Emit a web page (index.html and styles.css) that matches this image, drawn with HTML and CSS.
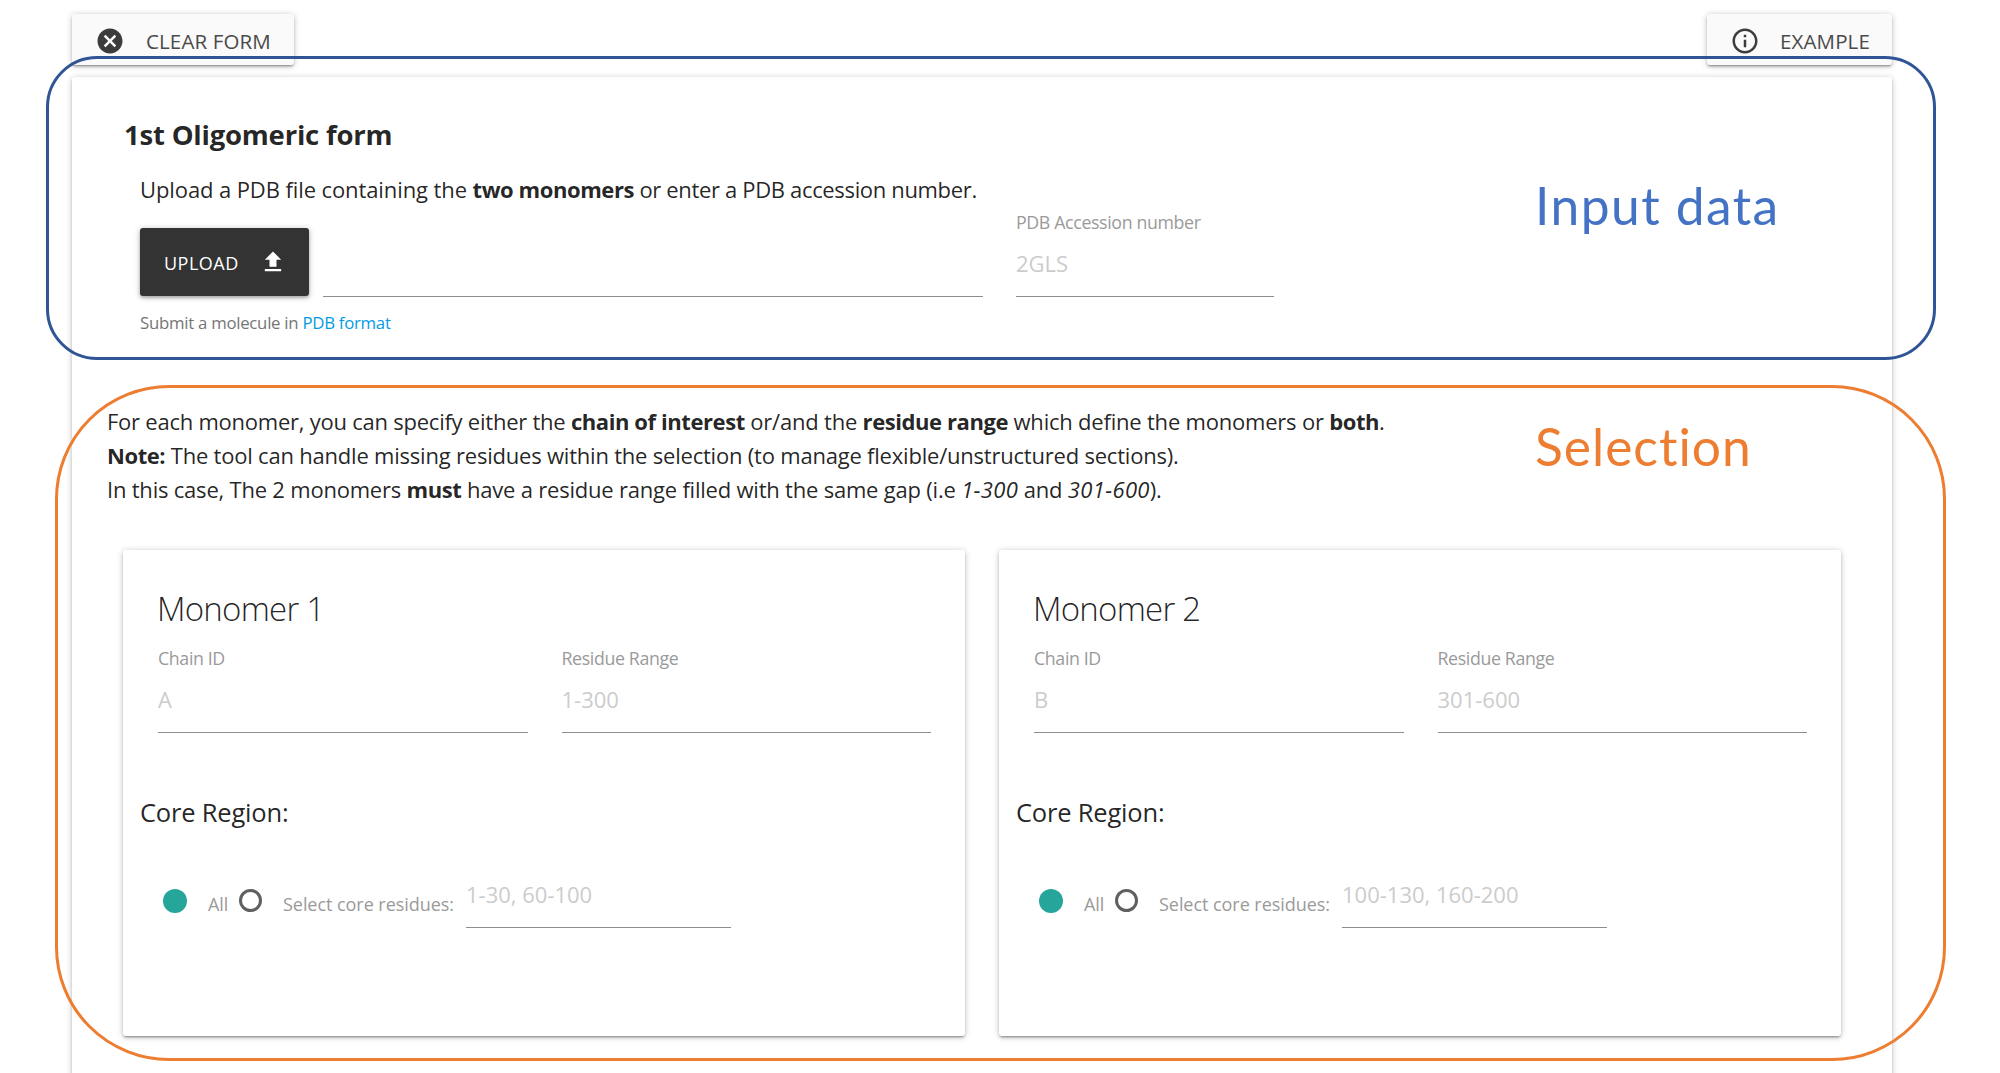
FILE: index.html
```html
<!DOCTYPE html>
<html lang="en">
<head>
<meta charset="utf-8">
<title>Oligomer form</title>
<link rel="stylesheet" href="styles.css">
</head>
<body>
<div class="page">
  <div class="toolbar">
    <button class="btn btn-clear" type="button">
      <svg class="icon" viewBox="0 0 24 24"><path d="M12 2C6.47 2 2 6.47 2 12s4.47 10 10 10 10-4.47 10-10S17.53 2 12 2zm5 13.59L15.59 17 12 13.41 8.41 17 7 15.59 10.59 12 7 8.41 8.41 7 12 10.59 15.59 7 17 8.41 13.41 12 17 15.59z"/></svg>
      <span>CLEAR FORM</span>
    </button>
    <button class="btn btn-example" type="button">
      <svg class="icon" viewBox="0 0 24 24"><path d="M11 17h2v-6h-2v6zm1-15C6.48 2 2 6.48 2 12s4.48 10 10 10 10-4.48 10-10S17.52 2 12 2zm0 18c-4.41 0-8-3.59-8-8s3.59-8 8-8 8 3.59 8 8-3.59 8-8 8zM11 9h2V7h-2v2z"/></svg>
      <span>EXAMPLE</span>
    </button>
  </div>

  <main class="panel">
    <section class="source">
      <h2 class="title">1st Oligomeric form</h2>
      <p class="lead"><span class="t1">Upload a PDB file containing the </span><b>two monomers</b> <span class="t2">or enter a PDB accession number.</span></p>
      <div class="source-row">
        <button class="upload" type="button">
          <span>UPLOAD</span>
          <svg class="upload-icon" viewBox="0 0 24 24"><path d="M9 16h6v-6h4l-7-7-7 7h4zm-4 2h14v2H5z"/></svg>
        </button>
        <input class="input file-path" type="text" aria-label="File">
        <label class="field accession"><span class="label">PDB Accession number</span><input class="input" type="text" placeholder="2GLS"></label>
      </div>
      <p class="hint">Submit a molecule in <a class="link">PDB format</a></p>
    </section>

    <section class="selection">
      <p class="text"><span class="t3">For each monomer, you can specify either the </span><b>chain of interest</b> or/and the <b>residue range</b> which define the monomers or <b>both</b>.<br>
      <b>Note:</b> The tool can handle missing residues within the selection (to manage flexible/unstructured sections).<br>
      In this case, The 2 monomers <b>must</b> have a residue range filled with the same gap (i.e <i>1-300</i> and <i>301-600</i>).</p>

      <div class="cards">
        <div class="card">
          <h3 class="card-title">Monomer 1</h3>
          <div class="fields">
            <label class="field"><span class="label">Chain ID</span><input class="input" type="text" placeholder="A"></label>
            <label class="field"><span class="label">Residue Range</span><input class="input" type="text" placeholder="1-300"></label>
          </div>
          <h4 class="core-title">Core Region:</h4>
          <div class="core">
            <span class="radio radio-on"></span><span class="radio-label all">All</span>
            <span class="radio"></span><span class="radio-label">Select core residues:</span>
            <input class="input" type="text" placeholder="1-30, 60-100">
          </div>
        </div>
        <div class="card">
          <h3 class="card-title">Monomer 2</h3>
          <div class="fields">
            <label class="field"><span class="label">Chain ID</span><input class="input" type="text" placeholder="B"></label>
            <label class="field"><span class="label">Residue Range</span><input class="input" type="text" placeholder="301-600"></label>
          </div>
          <h4 class="core-title">Core Region:</h4>
          <div class="core">
            <span class="radio radio-on"></span><span class="radio-label all">All</span>
            <span class="radio"></span><span class="radio-label">Select core residues:</span>
            <input class="input" type="text" placeholder="100-130, 160-200">
          </div>
        </div>
      </div>
    </section>
  </main>

  <div class="callout callout-input"><span class="callout-text">Input data</span></div>
  <div class="callout callout-selection"><span class="callout-text">Selection</span></div>
</div>
</body>
</html>
```
FILE: styles.css
```css
* { box-sizing: border-box; }
body { margin: 0; background: #fff; }
.page {
  position: relative;
  width: 2000px;
  height: 1073px;
  overflow: hidden;
  font-family: "Open Sans", "Noto Sans", sans-serif;
  color: rgba(0, 0, 0, .87);
}
h2, h3, h4, p { margin: 0; }
button { border: 0; font-family: inherit; text-align: left; }

.toolbar {
  display: flex;
  justify-content: space-between;
  padding: 14px 108px 0 72px;
}
.btn, .panel, .card {
  box-shadow: 0 2px 2px 0 rgba(0, 0, 0, .17), 0 3px 1px -2px rgba(0, 0, 0, .16), 0 1px 6px 0 rgba(0, 0, 0, .24);
  border-radius: 3px;
}
.btn {
  display: flex;
  align-items: center;
  height: 51px;
  padding: 2px 0 0 23px;
  background: #fafafa;
  color: #4a4a4a;
  font-size: 20.5px;
  line-height: 30px;
  letter-spacing: .13px;
}
.btn-clear { width: 222px; }
.btn-example { width: 185px; }
.icon { width: 30px; height: 30px; margin-right: 21px; fill: #3c3c3c; }
.btn-example .icon { margin-right: 20px; }

.panel {
  width: 1820px;
  height: 1040px;
  margin: 12px 0 0 72px;
  padding-top: 38px;
  background: #fff;
}
.source { height: 289px; padding-left: 68px; }
.title {
  margin: 0 0 17px -16px;
  font-size: 27.5px;
  font-weight: 700;
  line-height: 40px;
  letter-spacing: -.21px;
}
.lead { font-size: 22px; line-height: 34px; letter-spacing: -.34px; }
.lead .t1 { letter-spacing: -.1px; }
b { font-weight: 700; letter-spacing: -.42px; }
.source-row {
  display: flex;
  align-items: flex-end;
  height: 91px;
}
.upload {
  display: flex;
  align-items: center;
  width: 169px;
  height: 68px;
  margin: 0 14px 1px 0;
  padding: 2px 0 0 24px;
  border-radius: 3px;
  background: #333;
  box-shadow: 0 2px 3px 0 rgba(0, 0, 0, .2), 0 1px 6px 0 rgba(0, 0, 0, .25);
  color: #fff;
  font-size: 18px;
  letter-spacing: .5px;
}
.upload-icon { width: 28px; height: 28px; margin: -3px 0 0 20px; fill: #fff; }
.file-path.input { width: 660px; }
.accession { width: 258px; margin-left: 33px; }

.field { display: block; }
.label {
  display: block;
  color: #9a9a9a;
  font-size: 17.8px;
  line-height: 24px;
  letter-spacing: -.37px;
}
.input {
  display: block;
  width: 100%;
  height: 63px;
  padding: 0 0 5px;
  border: 0;
  border-bottom: 1px solid #8e8e8e;
  border-radius: 0;
  background: transparent;
  font: 22px "Open Sans", "Noto Sans", sans-serif;
}
.input::placeholder { color: #ccc; opacity: 1; }
.hint {
  margin-top: 13px;
  color: #757575;
  font-size: 16.8px;
  line-height: 25px;
  letter-spacing: -.27px;
}
.link { color: #039be5; }

.text {
  padding-left: 35px;
  font-size: 22px;
  line-height: 34px;
  letter-spacing: -.21px;
}
.text .t3 { letter-spacing: -.24px; }
i { letter-spacing: .35px; }
.cards {
  display: grid;
  grid-template-columns: 842px 842px;
  gap: 34px;
  margin: 44px 0 0 51px;
}
.card { height: 486px; padding-top: 37px; background: #fff; }
.card-title {
  padding-left: 34px;
  font-size: 33px;
  font-weight: 300;
  line-height: 44px;
  letter-spacing: -.75px;
}
.fields {
  display: grid;
  grid-template-columns: 1fr 1fr;
  gap: 34px;
  margin-top: 15px;
  padding: 0 34px 0 35px;
}
.core-title {
  margin-top: 61px;
  padding-left: 17px;
  font-size: 25.5px;
  font-weight: 400;
  line-height: 36px;
  letter-spacing: -.2px;
}
.core {
  display: flex;
  align-items: center;
  margin-top: 35px;
  padding-left: 40px;
}
.radio {
  flex: none;
  width: 23px;
  height: 23px;
  margin-top: 8px;
  border: 3px solid #606060;
  border-radius: 50%;
}
.radio-on { width: 24px; height: 24px; border: 0; background: #26a69a; }
.radio-label {
  width: 183px;
  margin: 15px 0 0 21px;
  color: #9a9a9a;
  font-size: 18px;
  line-height: 24px;
  letter-spacing: -.05px;
  white-space: nowrap;
}
.radio-label.all { width: 31px; }
.core .input { width: 265px; }

/* Outlines drawn over the form */
.callout { position: absolute; border: 3px solid; pointer-events: none; }
.callout-text {
  position: absolute;
  font-family: Lato, sans-serif;
  font-size: 51.5px;
  line-height: 60px;
  white-space: nowrap;
}
.callout-input {
  left: 46px;
  top: 56px;
  width: 1890px;
  height: 304px;
  border-color: #2f5597;
  border-radius: 51px;
}
.callout-input .callout-text { left: 1486px; top: 116px; color: #4472c4; letter-spacing: 1.45px; }
.callout-selection {
  left: 55px;
  top: 385px;
  width: 1891px;
  height: 676px;
  border-color: #ed7d31;
  border-radius: 114px;
}
.callout-selection .callout-text { left: 1477px; top: 28px; color: #ed7d31; letter-spacing: 1px; }
```
